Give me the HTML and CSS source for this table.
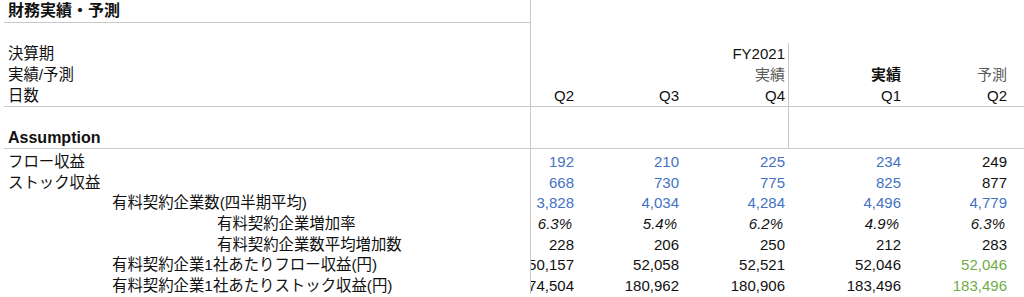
FILE: index.html
```html
<!DOCTYPE html>
<html lang="ja">
<head>
<meta charset="utf-8">
<link rel="stylesheet" href="styles.css">
</head>
<body>
<div class="sheet">
  <!-- title row -->
  <div class="c a title line-b">財務実績・予測</div>
  <div class="c b"></div><div class="c"></div><div class="c"></div><div class="c"></div><div class="c"></div><div class="c"></div>

  <!-- blank row -->
  <div class="c a"></div>
  <div class="c b"></div><div class="c"></div><div class="c"></div><div class="c"></div><div class="c"></div><div class="c"></div>

  <!-- 決算期 -->
  <div class="c a lbl">決算期</div>
  <div class="c b n"></div><div class="c n"></div><div class="c n">FY2021</div><div class="c n e"></div><div class="c n"></div><div class="c"></div>

  <!-- 実績/予測 -->
  <div class="c a lbl">実績/予測</div>
  <div class="c b n"></div><div class="c n"></div><div class="c n gray">実績</div><div class="c n e bold">実績</div><div class="c n gray">予測</div><div class="c"></div>

  <!-- 日数 -->
  <div class="c a lbl line-b">日数</div>
  <div class="c b n line-b">Q2</div><div class="c n line-b">Q3</div><div class="c n line-b">Q4</div><div class="c n e line-b">Q1</div><div class="c n line-b">Q2</div><div class="c line-b"></div>

  <!-- blank -->
  <div class="c a"></div>
  <div class="c b"></div><div class="c"></div><div class="c"></div><div class="c e"></div><div class="c"></div><div class="c"></div>

  <!-- Assumption -->
  <div class="c a line-b assume">Assumption</div>
  <div class="c b line-b"></div><div class="c line-b"></div><div class="c line-b"></div><div class="c e line-b"></div><div class="c line-b"></div><div class="c line-b"></div>

  <!-- data rows -->
  <div class="c a d lbl">フロー収益</div>
  <div class="c b n d blue">192</div><div class="c n d blue">210</div><div class="c n d blue">225</div><div class="c n d blue">234</div><div class="c n d">249</div><div class="c d"></div>

  <div class="c a d lbl">ストック収益</div>
  <div class="c b n d blue">668</div><div class="c n d blue">730</div><div class="c n d blue">775</div><div class="c n d blue">825</div><div class="c n d">877</div><div class="c d"></div>

  <div class="c a d lbl ind1">有料契約企業数(四半期平均)</div>
  <div class="c b n d blue">3,828</div><div class="c n d blue">4,034</div><div class="c n d blue">4,284</div><div class="c n d blue">4,496</div><div class="c n d blue">4,779</div><div class="c d"></div>

  <div class="c a d lbl ind2">有料契約企業増加率</div>
  <div class="c b n d it">6.3%</div><div class="c n d it">5.4%</div><div class="c n d it">6.2%</div><div class="c n d it">4.9%</div><div class="c n d it">6.3%</div><div class="c d"></div>

  <div class="c a d lbl ind2">有料契約企業数平均増加数</div>
  <div class="c b n d">228</div><div class="c n d">206</div><div class="c n d">250</div><div class="c n d">212</div><div class="c n d">283</div><div class="c d"></div>

  <div class="c a d lbl ind1">有料契約企業1社あたりフロー収益(円)</div>
  <div class="c b n d">50,157</div><div class="c n d">52,058</div><div class="c n d">52,521</div><div class="c n d">52,046</div><div class="c n d green">52,046</div><div class="c d"></div>

  <div class="c a d lbl ind1">有料契約企業1社あたりストック収益(円)</div>
  <div class="c b n d">174,504</div><div class="c n d">180,962</div><div class="c n d">180,906</div><div class="c n d">183,496</div><div class="c n d green">183,496</div><div class="c d"></div>
</div>
</body>
</html>
```

FILE: styles.css
```css
html, body {
  margin: 0;
  padding: 0;
  background: #ffffff;
}

body {
  font-family: "Liberation Sans", "Noto Sans CJK JP", sans-serif;
  font-size: 15px;
  color: #111111;
  overflow: hidden;
}

.sheet {
  display: grid;
  grid-template-columns: 526px 47px 105px 106px 116px 106px 1fr;
  grid-template-rows: 23px 20px 21px 21px 22px 20px 22px repeat(7, 20.7px);
  margin-left: 4px;
}

.c {
  box-sizing: border-box;
  line-height: 21px;
  white-space: nowrap;
  overflow: hidden;
  min-width: 0;
}

.a {
  padding-left: 4px;
}

.lbl {
  font-size: 15.4px;
}

.title {
  font-size: 16px;
  font-weight: 700;
  line-height: 22px;
}

.assume {
  font-size: 16px;
  font-weight: 700;
}

.b {
  border-left: 1px solid #c9c9c9;
}

.e {
  border-left: 1px solid #c9c9c9;
}

.line-b {
  border-bottom: 1px solid #c9c9c9;
}

.n {
  display: flex;
  justify-content: flex-end;
  padding-right: 3px;
}

.d {
  padding-top: 5px;
  line-height: 15.7px;
}

.ind1 {
  padding-left: 108px;
}

.ind2 {
  padding-left: 213px;
}

.gray {
  color: #5a5a5a;
}

.bold {
  font-weight: 700;
}

.blue {
  color: #4472c4;
}

.green {
  color: #70ad47;
}

.it {
  font-style: italic;
  padding-right: 5px;
}
```
